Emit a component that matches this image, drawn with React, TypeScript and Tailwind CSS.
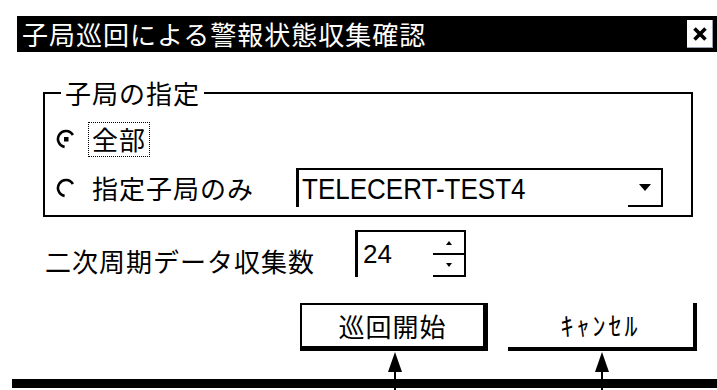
import React from "react";

function Radio({ checked }: { checked?: boolean }) {
  return (
    <svg width="20" height="20" viewBox="0 0 20 20" className="shrink-0">
      <path d="M16.9 6 A8 8 0 1 0 8.6 17.9" fill="none" stroke="black" strokeWidth="2.6" />
      {checked && <rect x="8" y="8" width="4.5" height="4.5" fill="black" />}
    </svg>
  );
}

function Pointer({ className }: { className: string }) {
  return (
    <div className={"absolute top-[352px] w-[14px] h-[38px] " + className}>
      <svg width="14" height="38" viewBox="0 0 14 38">
        <polygon points="0,20 7,0 14,20" fill="black" />
        <rect x="6" y="19" width="2" height="19" fill="black" />
      </svg>
    </div>
  );
}

export default function App() {
  return (
    <div className="relative w-[717px] h-[390px] overflow-hidden bg-white text-black font-['Noto_Sans_CJK_JP',sans-serif] text-[26px] leading-[30px] tracking-[1px]">
      {/* title bar */}
      <div className="mt-[16px] ml-[17px] h-[36px] bg-black flex items-center pl-[5px] pr-[4px]">
        <span className="text-white">子局巡回による警報状態収集確認</span>
        <div className="ml-auto w-[26px] h-[28px] bg-white border-r border-b border-gray-400 flex items-center justify-center">
          <svg width="18" height="18" viewBox="0 0 18 18">
            <path d="M3.5 3.5 L14.5 14.5 M14.5 3.5 L3.5 14.5" stroke="black" strokeWidth="3.6" />
          </svg>
        </div>
      </div>

      {/* group */}
      <fieldset className="mt-[29px] ml-[43px] w-[650px] border-2 border-black pl-[11px] pb-[8px]">
        <legend className="ml-[5px] px-[4px] leading-[24px]">子局の指定</legend>
        <div className="mt-[16px] h-[36px] flex items-center">
          <Radio checked />
          <div className="ml-[12px] h-[35px] px-[3px] border border-dotted border-black flex items-center">全部</div>
        </div>
        <div className="mt-[11px] h-[39px] flex items-center">
          <Radio />
          <span className="ml-[16px]">指定子局のみ</span>
          <div className="ml-[42px] w-[367px] h-[39px] border-t-2 border-l-[3px] border-black flex">
            <span className="pl-[3px] self-center font-['Liberation_Sans',sans-serif] tracking-normal text-[26px] leading-[30px] scale-y-[1.15] inline-block">
              TELECERT-TEST4
            </span>
            <div className="ml-auto w-[35px] border-r-2 border-b-2 border-black flex items-center justify-center">
              <svg width="12" height="7" viewBox="0 0 12 7">
                <polygon points="0,0 12,0 6,7" fill="black" />
              </svg>
            </div>
          </div>
        </div>
      </fieldset>

      {/* spin row */}
      <div className="mt-[13px] flex items-start">
        <span className="ml-[45px] mt-[16px]">二次周期データ収集数</span>
        <div className="ml-[40px] w-[111px] h-[47px] border-t-2 border-l-[3px] border-black flex">
          <span className="pl-[5px] pt-[7px] font-['Liberation_Sans',sans-serif] tracking-normal">24</span>
          <div className="ml-auto w-[33px] flex flex-col">
            <div className="h-[23px] border-r-2 border-b-2 border-black flex items-center justify-center">
              <svg width="6" height="4" viewBox="0 0 6 4">
                <polygon points="0,4 6,4 3,0" fill="black" />
              </svg>
            </div>
            <div className="flex-1 border-r-2 border-b-2 border-black flex items-center justify-center">
              <svg width="6" height="4" viewBox="0 0 6 4">
                <polygon points="0,0 6,0 3,4" fill="black" />
              </svg>
            </div>
          </div>
        </div>
      </div>

      {/* buttons */}
      <div className="mt-[26px] ml-[300px] flex gap-[20px]">
        <div className="w-[188px] h-[48px] border-t-2 border-l-2 border-r-[5px] border-b-[5px] border-black flex items-center justify-center">
          巡回開始
        </div>
        <div className="w-[189px] h-[48px] border-r-4 border-b-4 border-black flex items-center justify-center tracking-[3px]">
          ｷｬﾝｾﾙ
        </div>
      </div>

      {/* bottom bar */}
      <div className="mt-[28px] ml-[12px] h-[9px] bg-black" />

      <Pointer className="left-[388px]" />
      <Pointer className="left-[595px]" />
    </div>
  );
}
